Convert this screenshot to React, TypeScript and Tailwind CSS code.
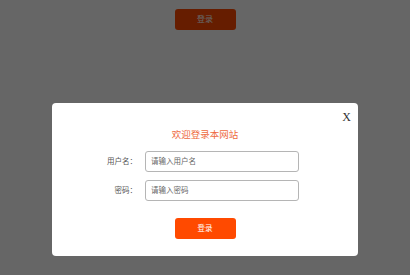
import React from 'react';

export default function App() {
  return (
    <div className="relative h-[275px] w-full bg-white overflow-hidden" style={{ fontFamily: '"Liberation Sans", "Noto Sans CJK SC", sans-serif' }}>
      {/* page behind overlay */}
      <div className="flex justify-center pt-[9px]">
        <button className="h-[21px] w-[61px] rounded-[3px] bg-[#ff4a00] text-[8px] text-white">登录</button>
      </div>

      {/* overlay + modal */}
      <div className="absolute inset-0 flex justify-center bg-black/60 pt-[103px]">
        <div className="relative h-[153px] w-[306px] rounded-[4px] bg-white">
          <button className="absolute right-[7px] top-[8px] text-[12px] leading-none text-[#333]" style={{ fontFamily: '"Liberation Serif", serif' }}>X</button>
          <div className="pt-[26px] text-center text-[9.5px] leading-[12px] text-[#ee6a3e]">欢迎登录本网站</div>
          <div className="mt-[10px] flex flex-col gap-[8px]">
            <div className="flex items-center">
              <label className="w-[85px] text-right text-[7.5px] text-[#555]">用户名：</label>
              <input
                className="ml-[8px] h-[21px] w-[154px] rounded-[3px] border border-[#b5b5b5] px-[5px] text-[7.5px] outline-none placeholder:text-[#666]"
                placeholder="请输入用户名"
              />
            </div>
            <div className="flex items-center">
              <label className="w-[85px] text-right text-[7.5px] text-[#555]">密码：</label>
              <input
                type="password"
                className="ml-[8px] h-[21px] w-[154px] rounded-[3px] border border-[#b5b5b5] px-[5px] text-[7.5px] outline-none placeholder:text-[#666]"
                placeholder="请输入密码"
              />
            </div>
          </div>
          <div className="mt-[17px] flex justify-center">
            <button className="h-[21px] w-[61px] rounded-[3px] bg-[#ff4a00] text-[7.5px] text-white">登录</button>
          </div>
        </div>
      </div>
    </div>
  );
}
